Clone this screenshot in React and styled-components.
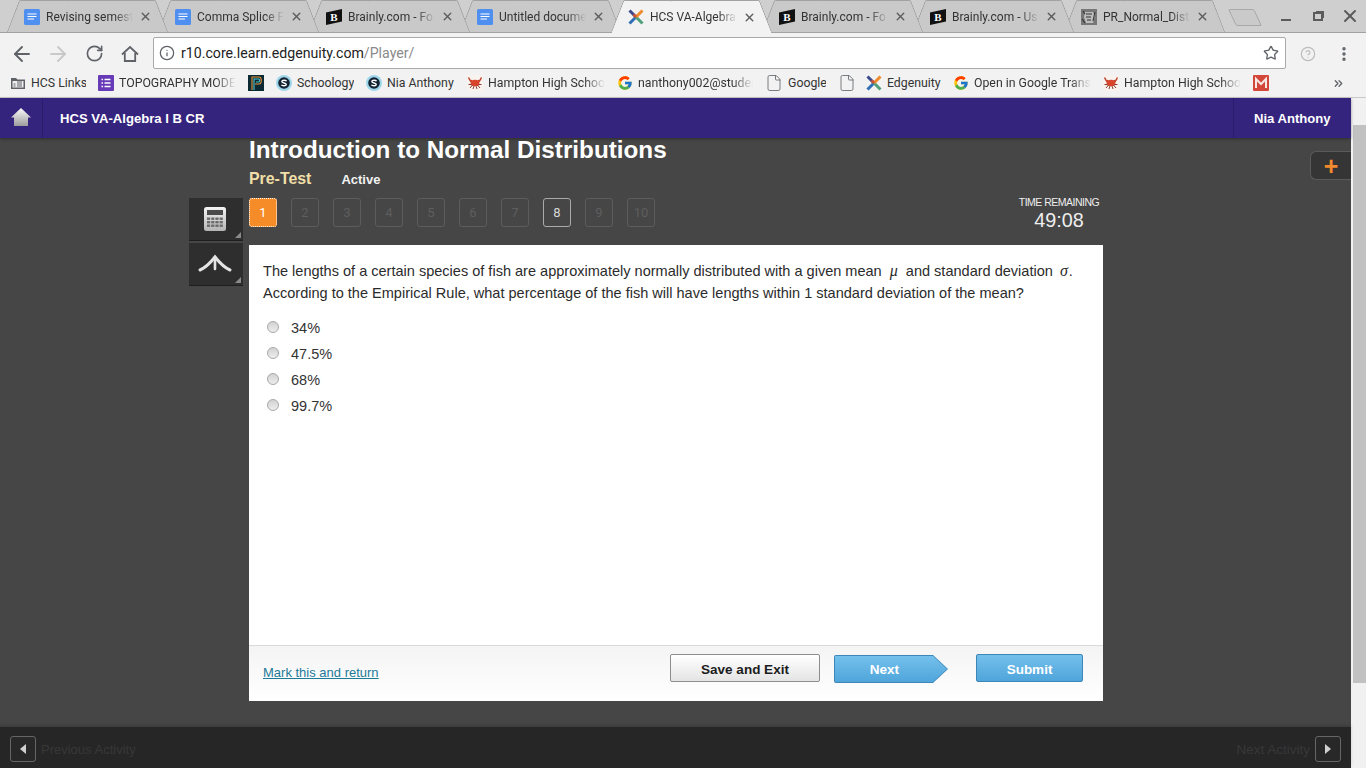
import React from "react";
import styled, { createGlobalStyle } from "styled-components";
import { ArrowLeft, ArrowRight, RotateCw, Info, Star, EllipsisVertical, X, File, ChevronsRight, CircleHelp } from "lucide-react";
import { FcGoogle } from "react-icons/fc";

const GlobalStyle = createGlobalStyle`
  html, body { margin: 0; padding: 0; height: 100%; overflow: hidden; }
  body { font-family: "Liberation Sans", Arial, sans-serif; }
  * { box-sizing: border-box; }
`;

const DocIcon = () => (
  <svg width="16" height="16" viewBox="0 0 16 16">
    <rect width="16" height="16" rx="1.5" fill="#4f8ff0" />
    <path d="M3.5 5h9M3.5 7.5h9M3.5 10h6.5" stroke="#fff" strokeWidth="1.1" />
  </svg>
);

const BrainlyIcon = () => (
  <svg width="16" height="16" viewBox="0 0 16 16">
    <path d="M0 3.5L16 0v12.5L0 16z" fill="#111" />
    <text x="8" y="12" textAnchor="middle" fontFamily="Liberation Serif, serif" fontWeight="700" fontSize="11" fill="#fff">B</text>
  </svg>
);

const EdgenuityIcon = () => (
  <svg width="16" height="16" viewBox="0 0 16 16" strokeWidth="3" strokeLinecap="butt">
    <path d="M1.500 1.500L8 8" stroke="#3b4a8f" />
    <path d="M8 8L1.500 14.500" stroke="#2f6fb5" />
    <path d="M8 8L14.500 14.500" stroke="#4f9f7a" />
    <path d="M14.500 1.500L8 8" stroke="#f08a2a" />
    <path d="M5.500 5.500L8 8" stroke="#c8553a" />
  </svg>
);

const PhotoIcon = () => (
  <svg width="16" height="16" viewBox="0 0 16 16">
    <rect width="16" height="16" fill="#777" />
    <path d="M4 3h8l2 4-2 7H5L3 8z" fill="#bdbdbd" />
    <path d="M5 5h6M5 8h5M6 11h4M2 2l2 3M14 3l-2 9M1 10l3 4" stroke="#333" strokeWidth="1.100" />
  </svg>
);

const FolderIcon = () => (
  <svg width="16" height="16" viewBox="0 0 16 16">
    <path d="M1 3h5l1.500 1.500H15V14H1z" fill="#5f6368" />
    <rect x="2.500" y="6" width="11" height="6.500" fill="#eee" />
    <path d="M7 7h5M7 9h5M7 11h5M3.500 9h2M3.500 11h2" stroke="#5f6368" />
  </svg>
);

const FormsIcon = () => (
  <svg width="16" height="16" viewBox="0 0 16 16">
    <rect width="16" height="16" rx="1" fill="#673ab7" />
    <path d="M3.500 4.500h1.500M3.500 8h1.500M3.500 11.500h1.500M6.500 4.500h6M6.500 8h6M6.500 11.500h6" stroke="#fff" strokeWidth="1.300" />
  </svg>
);

const PearsonIcon = () => (
  <svg width="16" height="16" viewBox="0 0 16 16" fill="none">
    <rect width="16" height="16" fill="#0c2a33" />
    <path d="M4 15V2h7c3 0 3 7 0 7H7" stroke="#e8953a" strokeWidth="1.100" />
    <path d="M6 15V4h4.500c1.500 0 1.500 3 0 3H8" stroke="#4fc3d0" strokeWidth="1.100" />
  </svg>
);

const SchoologyIcon = () => (
  <svg width="16" height="16" viewBox="0 0 16 16">
    <circle cx="8" cy="8" r="8" fill="#9fd6ea" />
    <circle cx="8" cy="8" r="5.800" fill="#123" />
    <path d="M10.500 6.200C10 5 6 4.800 5.800 6.500 5.700 8.500 10.500 7.500 10.300 9.600 10 11.200 6 11 5.500 9.700" fill="none" stroke="#fff" strokeWidth="1.400" />
  </svg>
);

const CrabIcon = () => (
  <svg width="16" height="16" viewBox="0 0 16 16">
    <rect width="16" height="16" fill="#f8f3ef" />
    <ellipse cx="8" cy="8" rx="4.500" ry="3.200" fill="#d8452b" />
    <path d="M1.500 2.500l2 3.500 1.500-.5M14.500 2.500l-2 3.500-1.500-.5" stroke="#c7402a" strokeWidth="1.500" fill="none" />
    <path d="M3 13l2.500-3M13 13l-2.500-3M1.500 9.500l3 0M14.500 9.500l-3 0M6 14l1-3M10 14l-1-3" stroke="#8f3f2e" strokeWidth="1" />
  </svg>
);

const GmailIcon = () => (
  <svg width="16" height="16" viewBox="0 0 16 16">
    <rect width="16" height="16" rx="1" fill="#d3473a" />
    <path d="M3 13V4l5 5 5-5v9" fill="none" stroke="#f6e7e5" strokeWidth="2" />
  </svg>
);

const GoogleIcon = () => <FcGoogle size={16} />;
const PageIcon = () => <File size={18} strokeWidth={1.100} color="#5f6368" />;

const ChromeHome = () => (
  <svg width="18" height="18" viewBox="0 0 18 18" fill="none" stroke="#5f6368" strokeWidth="1.800" strokeLinejoin="miter">
    <path d="M1 9.500L9 2l8 7.500" />
    <path d="M3.800 8v8h10.400V8" />
  </svg>
);

const tabs = [
  { title: "Revising semest", Icon: DocIcon },
  { title: "Comma Splice F", Icon: DocIcon },
  { title: "Brainly.com - Fo", Icon: BrainlyIcon },
  { title: "Untitled docume", Icon: DocIcon },
  { title: "HCS VA-Algebra", Icon: EdgenuityIcon, active: true },
  { title: "Brainly.com - Fo", Icon: BrainlyIcon },
  { title: "Brainly.com - Us", Icon: BrainlyIcon },
  { title: "PR_Normal_Dist", Icon: PhotoIcon },
];

const bookmarks = [
  { label: "HCS Links", Icon: FolderIcon, width: 55 },
  { label: "TOPOGRAPHY MODEL", Icon: FormsIcon, width: 117, fade: true },
  { Icon: PearsonIcon },
  { label: "Schoology", Icon: SchoologyIcon, width: 57 },
  { label: "Nia Anthony", Icon: SchoologyIcon, width: 68 },
  { label: "Hampton High School", Icon: CrabIcon, width: 117, fade: true },
  { label: "nanthony002@student", Icon: GoogleIcon, width: 115, fade: true },
  { label: "Google", Icon: PageIcon, width: 38 },
  { Icon: PageIcon, pull: true },
  { label: "Edgenuity", Icon: EdgenuityIcon, width: 54 },
  { label: "Open in Google Translate", Icon: GoogleIcon, width: 117, fade: true },
  { label: "Hampton High School", Icon: CrabIcon, width: 117, fade: true },
  { Icon: GmailIcon },
];

const choices = ["34%", "47.5%", "68%", "99.7%"];
const pages = [1, 2, 3, 4, 5, 6, 7, 8, 9, 10];

const HomeGlyph = () => (
  <svg width="20" height="20" viewBox="0 0 20 20">
    <defs>
      <linearGradient id="homeFill" x1="0" y1="0" x2="0" y2="1">
        <stop offset="0" stopColor="#fbfbfb" />
        <stop offset="1" stopColor="#9c9c9c" />
      </linearGradient>
    </defs>
    <path d="M10 1L20 10.500H17V19H3V10.500H0z" fill="url(#homeFill)" />
  </svg>
);

const CalculatorGlyph = () => (
  <svg width="22" height="24" viewBox="0 0 22 24">
    <defs>
      <linearGradient id="calcFill" x1="0" y1="0" x2="0" y2="1">
        <stop offset="0" stopColor="#f4f4f4" />
        <stop offset="1" stopColor="#b4b4b4" />
      </linearGradient>
    </defs>
    <rect width="22" height="24" rx="2.500" fill="url(#calcFill)" />
    <rect x="3" y="3" width="16" height="5" fill="#4a4a4a" />
    {[10.500, 14, 17.500].map((y) =>
      [3, 7.200, 11.400, 15.600].map((x) => (
        <rect key={`${x}-${y}`} x={x} y={y} width="3.200" height="2.400" fill="#6a6a6a" />
      ))
    )}
  </svg>
);

const CurveGlyph = () => (
  <svg width="34" height="20" viewBox="0 0 34 20" fill="none" stroke="#e4e4e4" strokeWidth="3" strokeLinecap="round">
    <path d="M2 16C9 13 13 8 17 3C21 8 25 13 32 16" />
    <path d="M17 3V15" strokeWidth="2.600" />
  </svg>
);

const App = () => {
  return (
    <Screen>
      <GlobalStyle />
      <TabStrip>
        {tabs.map((tab, index) => (
          <Tab key={index} $active={tab.active} $order={tabs.length - index}>
            <tab.Icon />
            <TabTitle>{tab.title}</TabTitle>
            <X size={13} strokeWidth={2.600} color="#5c5c5c" />
          </Tab>
        ))}
        <NewTab />
        <WindowControls>
          <WindowMin />
          <WindowMax />
          <X size={20} strokeWidth={2.400} color="#5c5c5c" />
        </WindowControls>
      </TabStrip>

      <Toolbar>
        <NavButton><ArrowLeft size={24} strokeWidth={1.900} color="#5f6368" /></NavButton>
        <NavButton><ArrowRight size={24} strokeWidth={1.900} color="#c9c9c9" /></NavButton>
        <NavButton><RotateCw size={19} strokeWidth={2.100} color="#5f6368" /></NavButton>
        <NavButton><ChromeHome /></NavButton>
        <UrlBox>
          <Info size={16} strokeWidth={1.900} color="#5f6368" />
          <UrlText>r10.core.learn.edgenuity.com<UrlPath>/Player/</UrlPath></UrlText>
          <Star size={16} strokeWidth={2} color="#5f6368" />
        </UrlBox>
        <ToolbarEnd>
          <CircleHelp size={16} strokeWidth={1.800} color="#bdbdbd" />
          <EllipsisVertical size={18} strokeWidth={2.600} color="#5f6368" />
        </ToolbarEnd>
      </Toolbar>

      <BookmarkBar>
        {bookmarks.map((item, index) => (
          <Bookmark key={index} $pull={item.pull}>
            <item.Icon />
            {item.label && <BookmarkLabel $width={item.width} $fade={item.fade}>{item.label}</BookmarkLabel>}
          </Bookmark>
        ))}
        <BookmarkMore><ChevronsRight size={13} strokeWidth={2.400} color="#5f6368" /></BookmarkMore>
      </BookmarkBar>

      <Viewport>
        <Page>
          <Header>
            <HomeCell><HomeGlyph /></HomeCell>
            <CourseName>HCS VA-Algebra I B CR</CourseName>
            <UserName>Nia Anthony</UserName>
          </Header>

          <Stage>
            <ToolColumn>
              <ToolButton><CalculatorGlyph /></ToolButton>
              <ToolButton><CurveGlyph /></ToolButton>
            </ToolColumn>
            <Lesson>
              <Title>Introduction to Normal Distributions</Title>
              <SubRow>
                <Activity>Pre-Test</Activity>
                <Status>Active</Status>
              </SubRow>
              <PagerRow>
                <Pager>
                  {pages.map((n) => (
                    <PageButton key={n} $current={n === 1} $seen={n === 8}>{n}</PageButton>
                  ))}
                </Pager>
                <Timer>
                  <TimerLabel>TIME REMAINING</TimerLabel>
                  <TimerValue>49:08</TimerValue>
                </Timer>
              </PagerRow>
              <Card>
                <CardBody>
                  <Question>
                    The lengths of a certain species of fish are approximately normally distributed with a given mean <MathVar>μ</MathVar> and standard deviation <MathVar $tail>σ</MathVar>.
                    <br />
                    According to the Empirical Rule, what percentage of the fish will have lengths within 1 standard deviation of the mean?
                  </Question>
                  <ChoiceList>
                    {choices.map((choice) => (
                      <Choice key={choice}>
                        <Radio />
                        <span>{choice}</span>
                      </Choice>
                    ))}
                  </ChoiceList>
                </CardBody>
                <CardFooter>
                  <MarkLink href="#">Mark this and return</MarkLink>
                  <FooterActions>
                    <SaveButton>Save and Exit</SaveButton>
                    <NextButton>Next</NextButton>
                    <SubmitButton>Submit</SubmitButton>
                  </FooterActions>
                </CardFooter>
              </Card>
            </Lesson>
            <PlusTab>+</PlusTab>
          </Stage>

          <BottomBar>
            <BottomGroup>
              <StepButton><LeftTriangle /></StepButton>
              <StepLabel $size={13}>Previous Activity</StepLabel>
            </BottomGroup>
            <BottomGroup>
              <StepLabel $size={13.5}>Next Activity</StepLabel>
              <StepButton><RightTriangle /></StepButton>
            </BottomGroup>
          </BottomBar>
        </Page>
        <Scrollbar>
          <ScrollThumb />
        </Scrollbar>
      </Viewport>
    </Screen>
  );
};

export default App;

// Browser frame
const Screen = styled.div`
  width: 1366px;
  height: 768px;
  display: flex;
  flex-direction: column;
  overflow: hidden;
  background: #f2f2f2;
`;

const TabStrip = styled.div`
  height: 33px;
  flex: none;
  display: flex;
  padding-left: 13px;
  background: #cfcfcf;
  border-bottom: 1px solid #a2a2a2;
`;

const Tab = styled.div`
  position: relative;
  z-index: ${(p) => (p.$active ? 20 : p.$order)};
  width: 149px;
  height: ${(p) => (p.$active ? "33px" : "32px")};
  margin-right: 2px;
  flex: none;
  display: flex;
  align-items: center;
  padding: 1px 0 0 11px;
  font-family: Roboto, sans-serif;
  font-size: 12px;
  color: #333;

  &::before,
  &::after {
    content: "";
    position: absolute;
    top: 0;
    bottom: 0;
    width: 60%;
    z-index: -1;
    background: ${(p) => (p.$active ? "#f2f2f2" : "#c9c9c9")};
    border-top: 1px solid #a2a2a2;
    border-radius: 2px 2px 0 0;
  }

  &::before {
    left: 0;
    border-left: 1px solid #9a9a9a;
    transform: skewX(-21deg);
  }

  &::after {
    right: 0;
    border-right: 1px solid #9a9a9a;
    transform: skewX(21deg);
  }

  svg { flex: none; }
`;

const TabTitle = styled.div`
  width: 87px;
  margin: 0 6px;
  white-space: nowrap;
  overflow: hidden;
  mask-image: linear-gradient(to right, #000 78%, transparent 100%);
`;

const NewTab = styled.div`
  width: 26px;
  height: 17px;
  margin: 9px 0 0 11px;
  flex: none;
  border: 1px solid #a8a8a8;
  background: #cacaca;
  transform: skewX(25deg);
  border-radius: 2px;
`;

const WindowControls = styled.div`
  margin-left: auto;
  width: 104px;
  height: 32px;
  padding: 0 6px 0 19px;
  display: flex;
  align-items: center;
`;

const WindowMin = styled.div`
  width: 10px;
  height: 2px;
  margin-top: 8px;
  background: #5c5c5c;
`;

const WindowMax = styled.div`
  width: 10px;
  height: 9px;
  margin: 0 17px 0 22px;
  border: 2px solid #5c5c5c;
  box-shadow: 2px -2px 0 -1px #5c5c5c;
`;

const Toolbar = styled.div`
  height: 36px;
  flex: none;
  display: flex;
  align-items: flex-end;
  padding-left: 4px;
  background: #f2f2f2;
`;

const NavButton = styled.div`
  width: 36px;
  height: 31px;
  display: flex;
  align-items: center;
  justify-content: center;
  flex: none;
`;

const UrlBox = styled.div`
  width: 1133px;
  height: 32px;
  margin-left: 5px;
  padding: 0 6px 0 5px;
  display: flex;
  align-items: center;
  gap: 6px;
  background: #fff;
  border: 1px solid #a9a9a9;
  border-radius: 2px;
`;

const UrlText = styled.div`
  flex: 1;
  font-family: Roboto, sans-serif;
  font-size: 14.150px;
  color: #222;
`;

const UrlPath = styled.span`
  color: #8a8a8a;
`;

const ToolbarEnd = styled.div`
  flex: 1;
  height: 31px;
  padding: 0 13px 0 14px;
  display: flex;
  align-items: center;
  justify-content: space-between;
`;

const BookmarkBar = styled.div`
  height: 29px;
  flex: none;
  display: flex;
  align-items: center;
  gap: 12px;
  padding: 0 0 0 10px;
  background: #f2f2f2;
  border-bottom: 1px solid #c9c9c9;
`;

const Bookmark = styled.div`
  display: flex;
  align-items: center;
  gap: 5px;
  flex: none;
  margin-right: ${(p) => (p.$pull ? "-2px" : "0")};
`;

const BookmarkLabel = styled.div`
  width: ${(p) => p.$width}px;
  white-space: nowrap;
  overflow: hidden;
  font-family: Roboto, sans-serif;
  font-size: 12.300px;
  color: #333;
  ${(p) => p.$fade && "mask-image: linear-gradient(to right, #000 82%, transparent 100%);"}
`;

const BookmarkMore = styled.div`
  margin-left: auto;
  margin-right: 21px;
  display: flex;
`;

// Page
const Viewport = styled.div`
  flex: 1;
  min-height: 0;
  display: flex;
`;

const Page = styled.div`
  position: relative;
  flex: 1;
  min-width: 0;
  display: flex;
  flex-direction: column;
  background: #464646;
`;

const Header = styled.header`
  height: 40px;
  flex: none;
  display: flex;
  align-items: center;
  background: #35247e;
  color: #fff;
  font-size: 13.100px;
  font-weight: 700;
  box-shadow: 0 1px 3px rgba(0, 0, 0, 0.35);
`;

const HomeCell = styled.div`
  width: 43px;
  height: 100%;
  padding-bottom: 3px;
  display: flex;
  align-items: center;
  justify-content: center;
  border-right: 1px solid #2a1c68;
`;

const CourseName = styled.div`
  margin-left: 17px;
  flex: 1;
`;

const UserName = styled.div`
  width: 118px;
  height: 100%;
  display: flex;
  align-items: center;
  padding-left: 20px;
  border-left: 1px solid #2a1c68;
`;

const Stage = styled.main`
  position: relative;
  flex: 1;
  min-height: 0;
  display: flex;
  gap: 6px;
  padding-left: 189px;
`;

const ToolColumn = styled.div`
  width: 54px;
  padding-top: 60px;
  display: flex;
  flex-direction: column;
  gap: 2px;
`;

const ToolButton = styled.div`
  position: relative;
  height: 43px;
  padding-right: 2px;
  display: flex;
  align-items: center;
  justify-content: center;
  background: #2e2e2e;
  border-bottom: 1px solid #1f1f1f;

  &::after {
    content: "";
    position: absolute;
    right: 2px;
    bottom: 2px;
    border-style: solid;
    border-width: 0 0 6px 6px;
    border-color: transparent transparent #8a8a8a transparent;
  }
`;

const Lesson = styled.div`
  width: 854px;
  display: flex;
  flex-direction: column;
`;

const Title = styled.h1`
  margin: 0;
  height: 24px;
  line-height: 24px;
  font-size: 24.250px;
  font-weight: 700;
  color: #fff;
`;

const SubRow = styled.div`
  height: 36px;
  padding-bottom: 2px;
  display: flex;
  align-items: center;
  gap: 30px;
`;

const Activity = styled.div`
  font-size: 15.900px;
  font-weight: 700;
  color: #f0dfa8;
`;

const Status = styled.div`
  font-size: 13px;
  font-weight: 700;
  color: #f2f2f2;
`;

const PagerRow = styled.div`
  height: 47px;
  display: flex;
  justify-content: space-between;
`;

const Pager = styled.div`
  display: flex;
  gap: 14px;
  align-items: flex-start;
`;

const PageButton = styled.div`
  width: 28px;
  height: 29px;
  display: flex;
  align-items: center;
  justify-content: center;
  font-family: Roboto, sans-serif;
  font-size: 13px;
  border-radius: 3px;
  border: 1px solid ${(p) => (p.$current ? "#f68c28" : p.$seen ? "#aaa" : "#5c5c5c")};
  background: ${(p) => (p.$current ? "#f68c28" : "transparent")};
  color: ${(p) => (p.$current ? "#fff" : p.$seen ? "#d8d8d8" : "#5e5e5e")};
  outline: ${(p) => (p.$current ? "1px dotted #fff" : "none")};
  outline-offset: -1px;
`;

const Timer = styled.div`
  width: 88px;
  display: flex;
  flex-direction: column;
  align-items: center;
  color: #eee;
`;

const TimerLabel = styled.div`
  font-size: 10.500px;
  line-height: 12px;
  letter-spacing: -0.5px;
  margin-top: -2px;
  white-space: nowrap;
`;

const TimerValue = styled.div`
  font-size: 19.800px;
  line-height: 24px;
  white-space: nowrap;
`;

const Card = styled.section`
  height: 456px;
  display: flex;
  flex-direction: column;
  background: #fff;
`;

const CardBody = styled.div`
  flex: 1;
  padding: 15px 14px 0;
`;

const Question = styled.div`
  font-size: 14.540px;
  line-height: 22px;
  color: #2b2b2b;
`;

const MathVar = styled.i`
  display: inline-block;
  margin: ${(p) => (p.$tail ? "0 1px 0 3px" : "0 4px 0 4px")};
  font-family: "Liberation Serif", serif;
  font-size: 16px;
`;

const ChoiceList = styled.div`
  margin-top: 11px;
  display: flex;
  flex-direction: column;
`;

const Choice = styled.div`
  height: 26px;
  display: flex;
  align-items: center;
  gap: 12px;
  padding-left: 4px;
  font-size: 14.500px;
  color: #333;
`;

const Radio = styled.div`
  width: 12px;
  height: 12px;
  margin-top: -3px;
  border-radius: 50%;
  border: 1px solid #a8a8a8;
  background: linear-gradient(#d2d2d2, #ededed);
`;

const CardFooter = styled.div`
  height: 56px;
  flex: none;
  display: flex;
  align-items: center;
  justify-content: space-between;
  padding: 0 20px 0 14px;
  border-top: 1px solid #d9d9d9;
  background: linear-gradient(#f4f4f4, #ffffff);
`;

const MarkLink = styled.a`
  font-size: 13px;
  color: #1d7a99;
  margin-top: -3px;
`;

const FooterActions = styled.div`
  display: flex;
  align-items: flex-start;
  margin-top: -10px;
`;

const SaveButton = styled.button`
  width: 150px;
  height: 28px;
  padding: 2px 0 0;
  font-family: inherit;
  font-size: 13.500px;
  font-weight: 700;
  color: #1c1c1c;
  border: 1px solid #8d8d8d;
  border-radius: 2px;
  background: linear-gradient(#ffffff, #e4e4e4);
`;

const BlueButton = styled.button`
  height: 28px;
  padding: 2px 0 0;
  font-family: inherit;
  font-size: 13.500px;
  font-weight: 700;
  color: #fff;
  border: 1px solid #3d86b8;
  border-radius: 2px;
  background: linear-gradient(#74c0ec, #4fa5da);
`;

const NextButton = styled(BlueButton)`
  position: relative;
  width: 114px;
  margin: 1px 28px 0 14px;
  padding: 0 13px 0 0;
  border: none;
  background: #3d86b8;
  clip-path: polygon(0 0, 99px 0, 100% 50%, 99px 100%, 0 100%);

  &::before {
    content: "";
    position: absolute;
    inset: 1px;
    z-index: -1;
    background: linear-gradient(#74c0ec, #4fa5da);
    clip-path: polygon(0 0, 98px 0, 100% 50%, 98px 100%, 0 100%);
  }
`;

const SubmitButton = styled(BlueButton)`
  width: 107px;
`;

const PlusTab = styled.div`
  position: absolute;
  right: 0;
  top: 13px;
  width: 41px;
  height: 29px;
  padding-top: 2px;
  display: flex;
  align-items: center;
  justify-content: center;
  font-size: 25px;
  font-weight: 700;
  line-height: 1;
  color: #f28a2e;
  background: #353535;
  border: 1px solid #5a5a5a;
  border-right: none;
  border-radius: 6px 0 0 6px;
`;

const BottomBar = styled.footer`
  height: 41px;
  flex: none;
  display: flex;
  align-items: center;
  justify-content: space-between;
  padding: 3px 10px 0;
  background: #262626;
  box-shadow: 0 -2px 3px rgba(0, 0, 0, 0.15);
`;

const BottomGroup = styled.div`
  display: flex;
  align-items: center;
  gap: 5px;
`;

const StepButton = styled.div`
  width: 26px;
  height: 26px;
  display: flex;
  align-items: center;
  justify-content: center;
  border: 1px solid #666;
  border-radius: 3px;
  background: #282828;
`;

const LeftTriangle = styled.div`
  border-style: solid;
  border-width: 5px 6px 5px 0;
  border-color: transparent #d0d0d0 transparent transparent;
`;

const RightTriangle = styled.div`
  border-style: solid;
  border-width: 5px 0 5px 6px;
  border-color: transparent transparent transparent #d0d0d0;
`;

const StepLabel = styled.div`
  font-size: ${(p) => p.$size}px;
  color: #383838;
`;

const Scrollbar = styled.div`
  width: 15px;
  flex: none;
  padding: 27px 0 85px 2px;
  background: #f1f1f1;
  display: flex;
`;

const ScrollThumb = styled.div`
  flex: 1;
  background: #c1c1c1;
`;
